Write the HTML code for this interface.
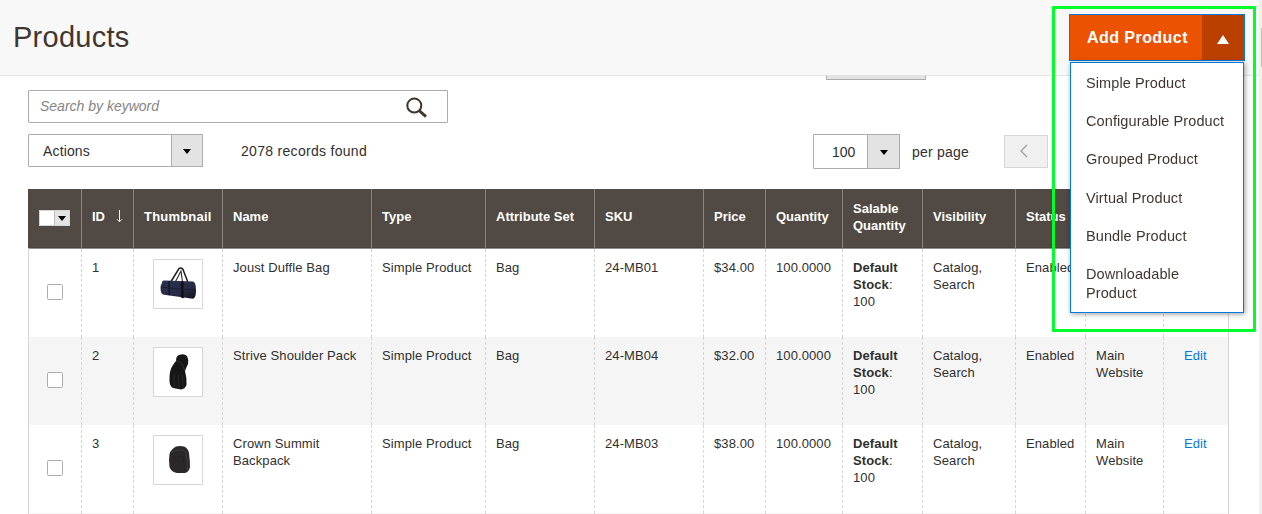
<!DOCTYPE html>
<html>
<head>
<meta charset="utf-8">
<style>
*{box-sizing:border-box;margin:0;padding:0}
html,body{width:1262px;height:514px;overflow:hidden;background:#fff}
body{position:relative;font-family:"Liberation Sans",sans-serif;color:#303030}
.a{position:absolute;white-space:nowrap}
.t13{font-size:13px;line-height:17px;letter-spacing:0.1px}
.t14{font-size:14px;line-height:20px}
.dd{position:absolute;white-space:nowrap;left:1086px;font-size:14.5px;line-height:20px;color:#41362f;letter-spacing:0.1px;will-change:transform}
.b{font-weight:700}
.hd{color:#fff;font-weight:700;font-size:13px;line-height:17px}
.vl{position:absolute;width:1px;top:248px;height:266px;background:repeating-linear-gradient(to bottom,#d6d6d6 0,#d6d6d6 3px,transparent 3px,transparent 5px) 0 1px/1px 88px no-repeat,repeating-linear-gradient(to bottom,#d6d6d6 0,#d6d6d6 3px,transparent 3px,transparent 5px) 0 89px/1px 88px no-repeat,repeating-linear-gradient(to bottom,#d6d6d6 0,#d6d6d6 3px,transparent 3px,transparent 5px) 0 177px/1px 88px no-repeat,repeating-linear-gradient(to bottom,#d6d6d6 0,#d6d6d6 3px,transparent 3px,transparent 5px) 0 265px/1px 1px no-repeat}
.hl{position:absolute;width:1px;top:189px;height:59px;background:#8a837f}
.cb{position:absolute;left:47px;width:16px;height:16px;border:1px solid #adadad;border-radius:1.5px;background:#fff}
.th{position:absolute;left:153px;width:50px;height:50px;border:1px solid #d6d6d6;background:#fff}
.lnk{color:#007bdb}
</style>
</head>
<body>
<!-- page header -->
<div class="a" style="left:0;top:0;width:1262px;height:75px;background:#f8f8f8"></div>
<div class="a" style="left:0;top:75px;width:1259px;height:1px;background:#e3e3e3"></div>
<div class="a" style="left:826px;top:76px;width:100px;height:4px;background:#e3e3e3;border:1px solid #adadad;border-top:0"></div>
<div class="a" style="left:13px;top:20px;font-size:29px;line-height:35px;color:#41362f;letter-spacing:0.25px">Products</div>
<div class="a" style="left:1259px;top:0;width:3px;height:514px;background:#f0f0f0"></div>
<div class="a" style="left:1261px;top:28px;width:1px;height:39px;background:#c1c1c1"></div>

<!-- search -->
<div class="a" style="left:28px;top:90px;width:420px;height:33px;border:1px solid #adadad;background:#fff;border-radius:1px"></div>
<div class="a t14" style="left:40px;top:96px;font-style:italic;color:#858585">Search by keyword</div>
<svg class="a" style="left:404px;top:96px" width="26" height="24" viewBox="0 0 26 24">
<circle cx="10.3" cy="9.6" r="7" fill="none" stroke="#41362f" stroke-width="2"/>
<line x1="15.2" y1="14.6" x2="22" y2="20.6" stroke="#41362f" stroke-width="2.8" stroke-linecap="butt"/>
</svg>

<!-- actions -->
<div class="a" style="left:28px;top:134px;width:175px;height:33px;border:1px solid #adadad;background:#fff;border-radius:1px"></div>
<div class="a" style="left:171px;top:134px;width:32px;height:33px;border:1px solid #adadad;background:#e3e3e3"></div>
<svg class="a" style="left:183px;top:149px" width="8" height="5"><polygon points="0,0 8,0 4,5" fill="#000"/></svg>
<div class="a t14" style="left:43px;top:141px;color:#303030;letter-spacing:0.15px">Actions</div>
<div class="a t14" style="left:241px;top:141px;letter-spacing:0.3px">2078 records found</div>

<!-- per page -->
<div class="a" style="left:813px;top:134px;width:87px;height:35px;border:1px solid #adadad;background:#fff;border-radius:1px"></div>
<div class="a" style="left:867px;top:134px;width:33px;height:35px;border:1px solid #adadad;background:#e3e3e3"></div>
<svg class="a" style="left:880px;top:150px" width="8" height="5"><polygon points="0,0 8,0 4,5" fill="#000"/></svg>
<div class="a t14" style="left:832px;top:142px">100</div>
<div class="a t14" style="left:912px;top:142px;letter-spacing:0.2px">per page</div>
<div class="a" style="left:1004px;top:135px;width:44px;height:33px;border:1px solid #d6d6d6;background:#f0f0f0"></div>
<svg class="a" style="left:1018px;top:143px" width="12" height="16"><polyline points="9,2 3,8 9,14" fill="none" stroke="#a0a0a0" stroke-width="1.3"/></svg>

<!-- table header -->
<div class="a" style="left:28px;top:189px;width:1200px;height:59px;background:#514943"></div>
<div class="a" style="left:28px;top:247px;width:1200px;height:1px;background:#4a423c"></div>
<div class="a" style="left:28px;top:248px;width:1201px;height:1px;background:#958f8b"></div>
<div class="hl" style="left:81px"></div>
<div class="hl" style="left:133px"></div>
<div class="hl" style="left:222px"></div>
<div class="hl" style="left:371px"></div>
<div class="hl" style="left:485px"></div>
<div class="hl" style="left:594px"></div>
<div class="hl" style="left:703px"></div>
<div class="hl" style="left:765px"></div>
<div class="hl" style="left:842px"></div>
<div class="hl" style="left:922px"></div>
<div class="hl" style="left:1015px"></div>
<div class="hl" style="left:1085px"></div>
<div class="hl" style="left:1163px"></div>

<div class="a" style="left:39px;top:210px;width:31px;height:16px;background:#fff;border:1px solid #d6d6d6"></div>
<div class="a" style="left:54px;top:211px;width:15px;height:14px;background:#e3e3e3;border-left:1px solid #bdbdbd"></div>
<svg class="a" style="left:58px;top:216px" width="8" height="5"><polygon points="0,0 8,0 4,5" fill="#000"/></svg>

<div class="a hd" style="left:92px;top:208px">ID</div>
<svg class="a" style="left:116px;top:210px" width="8" height="14"><line x1="3.5" y1="0" x2="3.5" y2="11.5" stroke="#f0f0f0" stroke-width="1"/><polyline points="1,9.3 3.5,11.8 6,9.3" fill="none" stroke="#f0f0f0" stroke-width="1"/></svg>
<div class="a hd" style="left:144px;top:208px;letter-spacing:0.2px">Thumbnail</div>
<div class="a hd" style="left:233px;top:208px">Name</div>
<div class="a hd" style="left:382px;top:208px">Type</div>
<div class="a hd" style="left:496px;top:208px">Attribute Set</div>
<div class="a hd" style="left:605px;top:208px">SKU</div>
<div class="a hd" style="left:714px;top:208px">Price</div>
<div class="a hd" style="left:776px;top:208px">Quantity</div>
<div class="a hd" style="left:853px;top:200px">Salable<br>Quantity</div>
<div class="a hd" style="left:933px;top:208px">Visibility</div>
<div class="a hd" style="left:1026px;top:208px">Status</div>
<div class="a hd" style="left:1096px;top:208px">Websites</div>
<div class="a hd" style="left:1174px;top:208px">Action</div>

<!-- rows -->
<div class="a" style="left:28px;top:337px;width:1200px;height:88px;background:#f5f5f5"></div>
<div class="a" style="left:28px;top:513px;width:1200px;height:1px;background:#f5f5f5"></div>
<div class="a" style="left:28px;top:248px;width:1px;height:266px;background:#d6d6d6"></div>
<div class="a" style="left:1228px;top:248px;width:1px;height:266px;background:#d6d6d6"></div>
<div class="vl" style="left:81px"></div>
<div class="vl" style="left:133px"></div>
<div class="vl" style="left:222px"></div>
<div class="vl" style="left:371px"></div>
<div class="vl" style="left:485px"></div>
<div class="vl" style="left:594px"></div>
<div class="vl" style="left:703px"></div>
<div class="vl" style="left:765px"></div>
<div class="vl" style="left:842px"></div>
<div class="vl" style="left:922px"></div>
<div class="vl" style="left:1015px"></div>
<div class="vl" style="left:1085px"></div>
<div class="vl" style="left:1163px"></div>

<!-- row 1 -->
<div class="cb" style="top:284px"></div>
<div class="th" style="top:259px">
<svg width="48" height="48" viewBox="0 0 48 48">
<defs><linearGradient id="dg" x1="0" y1="0" x2="1" y2="1"><stop offset="0" stop-color="#2d3354"/><stop offset="0.6" stop-color="#262a44"/><stop offset="1" stop-color="#15161e"/></linearGradient></defs>
<path d="M17 21.5 L25 8.5 Q27 7.3 28.8 9 L33.8 22" fill="none" stroke="#1e1e24" stroke-width="1.5"/>
<path d="M21.5 21.5 L27 11 L28.5 22" fill="none" stroke="#2a2a30" stroke-width="1.1"/>
<path d="M8 23 Q7.5 21 10 20.5 L39 21.5 Q42 22 42 30 Q42 38.5 39 38.7 L10 34.8 Q6.5 34.2 6.5 28 Q6.5 24.5 8 23 Z" fill="url(#dg)"/>
<path d="M26.8 21.5 L29.4 21.6 L29.8 38.3 L27.3 38 Z" fill="#101014"/>
<path d="M14 21 L16.2 21.1 L16.2 35.3 L14 35 Z" fill="#1a1c2a"/>
<path d="M7 27 Q20 28.5 41.5 30" fill="none" stroke="#1b1e30" stroke-width="1"/>
</svg>
</div>
<div class="a t13" style="left:92px;top:259px">1</div>
<div class="a t13" style="left:233px;top:259px">Joust Duffle Bag</div>
<div class="a t13" style="left:382px;top:259px">Simple Product</div>
<div class="a t13" style="left:496px;top:259px">Bag</div>
<div class="a t13" style="left:605px;top:259px">24-MB01</div>
<div class="a t13" style="left:714px;top:259px">$34.00</div>
<div class="a t13" style="left:776px;top:259px">100.0000</div>
<div class="a t13" style="left:853px;top:259px"><b>Default<br>Stock</b>:<br>100</div>
<div class="a t13" style="left:933px;top:259px">Catalog,<br>Search</div>
<div class="a t13" style="left:1026px;top:259px">Enabled</div>
<div class="a t13" style="left:1096px;top:259px">Main<br>Website</div>
<div class="a t13 lnk" style="left:1184px;top:259px">Edit</div>

<!-- row 2 -->
<div class="cb" style="top:372px"></div>
<div class="th" style="top:347px">
<svg width="48" height="48" viewBox="0 0 48 48">
<path d="M22 13 Q22 8 25 7 Q30 5 33 8 Q35 12 34 16 Q32 20 31 23 Q33 30 32.5 37 Q31 41 27 41.5 L19 40 Q15 38 15.5 30 Q15.5 22 19 17 Q21 14 22 13 Z" fill="#161616"/>
<path d="M22 13 Q27 11 31 23" fill="none" stroke="#3a3a3a" stroke-width="0.8"/>
<path d="M20 26 L20 39 M24.5 27 L25 40.5 M28.5 27 L29 40.5" stroke="#2c2c2c" stroke-width="0.9"/>
</svg>
</div>
<div class="a t13" style="left:92px;top:347px">2</div>
<div class="a t13" style="left:233px;top:347px">Strive Shoulder Pack</div>
<div class="a t13" style="left:382px;top:347px">Simple Product</div>
<div class="a t13" style="left:496px;top:347px">Bag</div>
<div class="a t13" style="left:605px;top:347px">24-MB04</div>
<div class="a t13" style="left:714px;top:347px">$32.00</div>
<div class="a t13" style="left:776px;top:347px">100.0000</div>
<div class="a t13" style="left:853px;top:347px"><b>Default<br>Stock</b>:<br>100</div>
<div class="a t13" style="left:933px;top:347px">Catalog,<br>Search</div>
<div class="a t13" style="left:1026px;top:347px">Enabled</div>
<div class="a t13" style="left:1096px;top:347px">Main<br>Website</div>
<div class="a t13 lnk" style="left:1184px;top:347px">Edit</div>

<!-- row 3 -->
<div class="cb" style="top:460px"></div>
<div class="th" style="top:435px">
<svg width="48" height="48" viewBox="0 0 48 48">
<path d="M22 10.5 Q26 9.5 30 10.5 Q34 12 35 17 Q36 25 36 31 Q35 36 31 37 L23 37 Q17 36 15.5 31 Q14.5 24 15.5 18 Q17 13 22 10.5 Z" fill="#2a2828"/>
<path d="M17 17 Q24 12 31 15 Q34 22 33 34" fill="none" stroke="#3e3c3b" stroke-width="1"/>
<path d="M18 22 Q24 19 29 21 Q31 28 30 36" fill="none" stroke="#242222" stroke-width="1"/>
</svg>
</div>
<div class="a t13" style="left:92px;top:435px">3</div>
<div class="a t13" style="left:233px;top:435px">Crown Summit<br>Backpack</div>
<div class="a t13" style="left:382px;top:435px">Simple Product</div>
<div class="a t13" style="left:496px;top:435px">Bag</div>
<div class="a t13" style="left:605px;top:435px">24-MB03</div>
<div class="a t13" style="left:714px;top:435px">$38.00</div>
<div class="a t13" style="left:776px;top:435px">100.0000</div>
<div class="a t13" style="left:853px;top:435px"><b>Default<br>Stock</b>:<br>100</div>
<div class="a t13" style="left:933px;top:435px">Catalog,<br>Search</div>
<div class="a t13" style="left:1026px;top:435px">Enabled</div>
<div class="a t13" style="left:1096px;top:435px">Main<br>Website</div>
<div class="a t13 lnk" style="left:1184px;top:435px">Edit</div>

<!-- add product button -->
<div class="a" style="left:1069px;top:14px;width:176px;height:47px;background:#eb5202;border:1px solid #007bdb"></div>
<div class="a" style="left:1202px;top:15px;width:42px;height:45px;background:#ba4000"></div>
<div class="a b" style="left:1087px;top:27px;font-size:16px;line-height:21px;color:#fff;letter-spacing:0.45px">Add Product</div>
<svg class="a" style="left:1217px;top:35px" width="12" height="9"><polygon points="0,9 12,9 6,0" fill="#fff"/></svg>

<!-- dropdown -->
<div class="a" style="left:1070px;top:62px;width:174px;height:251px;background:#fff;border:1px solid #007bdb;box-shadow:1px 1px 5px rgba(0,0,0,.4)"></div>
<div class="dd" style="top:73px">Simple Product</div>
<div class="dd" style="top:111px">Configurable Product</div>
<div class="dd" style="top:149px">Grouped Product</div>
<div class="dd" style="top:188px">Virtual Product</div>
<div class="dd" style="top:226px">Bundle Product</div>
<div class="dd" style="top:265px;line-height:19px">Downloadable<br>Product</div>

<!-- green highlight -->
<div class="a" style="left:1052px;top:6px;width:204px;height:326px;border:3px solid #00ff2a;border-radius:1px"></div>
</body>
</html>
